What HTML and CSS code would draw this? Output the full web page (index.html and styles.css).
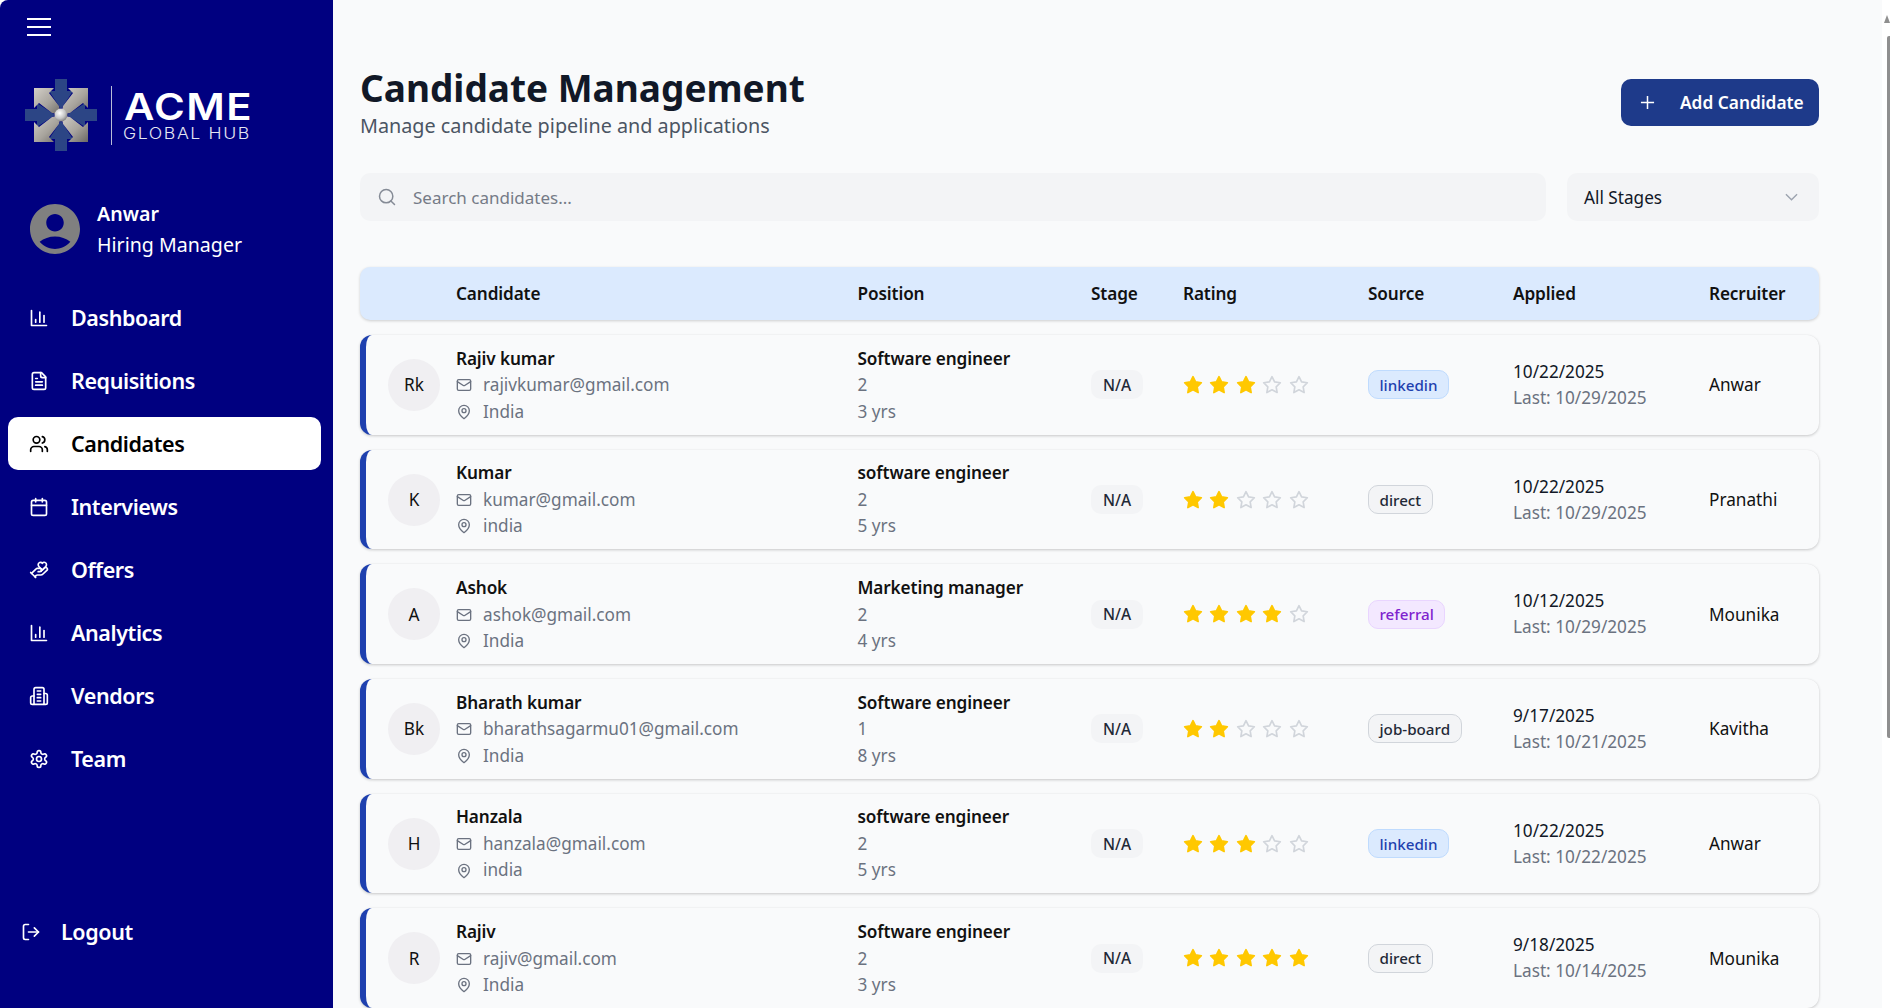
FILE: index.html
```html
<!DOCTYPE html>
<html lang="en">
<head>
<meta charset="utf-8">
<title>Candidate Management</title>
<link rel="stylesheet" href="styles.css">
</head>
<body>
<svg class="defs" width="0" height="0" aria-hidden="true">
  <defs>
    <symbol id="i-chart" viewBox="0 0 24 24"><path d="M3 3v18h18"/><path d="M18 17V9"/><path d="M13 17V5"/><path d="M8 17v-3"/></symbol>
    <symbol id="i-file" viewBox="0 0 24 24"><path d="M15 2H6a2 2 0 0 0-2 2v16a2 2 0 0 0 2 2h12a2 2 0 0 0 2-2V7Z"/><path d="M14 2v4a2 2 0 0 0 2 2h4"/><path d="M10 9H8"/><path d="M16 13H8"/><path d="M16 17H8"/></symbol>
    <symbol id="i-users" viewBox="0 0 24 24"><path d="M16 21v-2a4 4 0 0 0-4-4H6a4 4 0 0 0-4 4v2"/><circle cx="9" cy="7" r="4"/><path d="M22 21v-2a4 4 0 0 0-3-3.87"/><path d="M16 3.13a4 4 0 0 1 0 7.75"/></symbol>
    <symbol id="i-cal" viewBox="0 0 24 24"><path d="M8 2v4"/><path d="M16 2v4"/><rect x="3" y="4" width="18" height="18" rx="2"/><path d="M3 10h18"/></symbol>
    <symbol id="i-hand" viewBox="0 0 24 24"><path d="M11 14h2a2 2 0 1 0 0-4h-3c-.6 0-1.1.2-1.4.6L3 16"/><path d="m7 20 1.6-1.4c.3-.4.8-.6 1.4-.6h4c1.1 0 2.1-.4 2.8-1.2l4.6-4.4a2 2 0 0 0-2.75-2.91l-4.2 3.9"/><path d="m2 15 6 6"/><path d="M19.5 8.5c.7-.7 1.5-1.6 1.5-2.7A2.73 2.73 0 0 0 16 4a2.78 2.78 0 0 0-5 1.8c0 1.2.8 2 1.5 2.8L16 12Z"/></symbol>
    <symbol id="i-building" viewBox="0 0 24 24"><path d="M6 22V4a2 2 0 0 1 2-2h8a2 2 0 0 1 2 2v18Z"/><path d="M6 12H4a2 2 0 0 0-2 2v6a2 2 0 0 0 2 2h2"/><path d="M18 9h2a2 2 0 0 1 2 2v9a2 2 0 0 1-2 2h-2"/><path d="M10 6h4"/><path d="M10 10h4"/><path d="M10 14h4"/><path d="M10 18h4"/></symbol>
    <symbol id="i-gear" viewBox="0 0 24 24"><path d="M12.22 2h-.44a2 2 0 0 0-2 2v.18a2 2 0 0 1-1 1.73l-.43.25a2 2 0 0 1-2 0l-.15-.08a2 2 0 0 0-2.73.73l-.22.38a2 2 0 0 0 .73 2.73l.15.1a2 2 0 0 1 1 1.72v.51a2 2 0 0 1-1 1.74l-.15.09a2 2 0 0 0-.73 2.73l.22.38a2 2 0 0 0 2.73.73l.15-.08a2 2 0 0 1 2 0l.43.25a2 2 0 0 1 1 1.73V20a2 2 0 0 0 2 2h.44a2 2 0 0 0 2-2v-.18a2 2 0 0 1 1-1.73l.43-.25a2 2 0 0 1 2 0l.15.08a2 2 0 0 0 2.73-.73l.22-.39a2 2 0 0 0-.73-2.73l-.15-.08a2 2 0 0 1-1-1.74v-.5a2 2 0 0 1 1-1.74l.15-.09a2 2 0 0 0 .73-2.73l-.22-.38a2 2 0 0 0-2.73-.73l-.15.08a2 2 0 0 1-2 0l-.43-.25a2 2 0 0 1-1-1.73V4a2 2 0 0 0-2-2z"/><circle cx="12" cy="12" r="3"/></symbol>
    <symbol id="i-logout" viewBox="0 0 24 24"><path d="M9 21H5a2 2 0 0 1-2-2V5a2 2 0 0 1 2-2h4"/><path d="m16 17 5-5-5-5"/><path d="M21 12H9"/></symbol>
    <symbol id="i-mail" viewBox="0 0 24 24"><rect x="2" y="4" width="20" height="16" rx="2"/><path d="m22 7-8.97 5.7a1.94 1.94 0 0 1-2.06 0L2 7"/></symbol>
    <symbol id="i-pin" viewBox="0 0 24 24"><path d="M20 10c0 6-8 12-8 12s-8-6-8-12a8 8 0 0 1 16 0Z"/><circle cx="12" cy="10" r="3"/></symbol>
    <symbol id="i-star" viewBox="0 0 24 24"><polygon points="12 2 15.09 8.26 22 9.27 17 14.14 18.18 21.02 12 17.77 5.82 21.02 7 14.14 2 9.27 8.91 8.26 12 2"/></symbol>
    <linearGradient id="g-steel" x1="0" y1="0" x2="1" y2="1"><stop offset="0" stop-color="#d3cfc8"/><stop offset=".55" stop-color="#a8a49d"/><stop offset="1" stop-color="#6b6864"/></linearGradient>
    <radialGradient id="g-ball" cx=".4" cy=".35" r=".7"><stop offset="0" stop-color="#ffffff"/><stop offset=".6" stop-color="#c4c4c4"/><stop offset="1" stop-color="#777"/></radialGradient>
  </defs>
</svg>

<div class="app">
  <aside class="sidebar">
    <button class="menu-btn" aria-label="Menu">
      <svg class="menu-svg" viewBox="0 0 24 20"><path d="M0 2h24M0 10h24M0 18h24"/></svg>
    </button>
    <div class="brand">
      <svg class="brand-mark" viewBox="0 0 72 72">
        <g fill="#2c4585">
          <polygon points="30,0 42,0 42,12 48,12 36,30 24,12 30,12"/>
          <polygon points="30,72 42,72 42,60 48,60 36,42 24,60 30,60"/>
          <polygon points="0,30 0,42 12,42 12,48 30,36 12,24 12,30"/>
          <polygon points="72,30 72,42 60,42 60,48 42,36 60,24 60,30"/>
        </g>
        <g fill="url(#g-steel)">
          <polygon points="9,9 29,9 24,14 34,27 36,36 27,34 14,24 9,29"/>
          <polygon points="63,9 43,9 48,14 38,27 36,36 45,34 58,24 63,29"/>
          <polygon points="9,63 29,63 24,58 34,45 36,36 27,38 14,48 9,43"/>
          <polygon points="63,63 43,63 48,58 38,45 36,36 45,38 58,48 63,43"/>
        </g>
        <circle cx="36" cy="36" r="6.5" fill="url(#g-ball)"/>
      </svg>
      <div class="brand-text">
        <span class="brand-name">ACME</span>
        <span class="brand-sub">GLOBAL HUB</span>
      </div>
    </div>
    <div class="user">
      <svg class="user-avatar" viewBox="2 2 20 20"><path d="M12 2C6.48 2 2 6.48 2 12s4.48 10 10 10 10-4.48 10-10S17.52 2 12 2zm0 4c1.93 0 3.5 1.57 3.5 3.5S13.93 13 12 13s-3.5-1.57-3.5-3.5S10.07 6 12 6zm0 14c-2.03 0-4.43-.82-6.14-2.88C7.55 15.8 9.68 15 12 15s4.45.8 6.14 2.12C16.43 19.18 14.03 20 12 20z"/></svg>
      <div class="user-text">
        <div class="user-name">Anwar</div>
        <div class="user-role">Hiring Manager</div>
      </div>
    </div>
    <nav class="nav">
      <a class="nav-item"><svg class="ico nav-ico"><use href="#i-chart"/></svg>Dashboard</a>
      <a class="nav-item"><svg class="ico nav-ico"><use href="#i-file"/></svg>Requisitions</a>
      <a class="nav-item active"><svg class="ico nav-ico"><use href="#i-users"/></svg>Candidates</a>
      <a class="nav-item"><svg class="ico nav-ico"><use href="#i-cal"/></svg>Interviews</a>
      <a class="nav-item"><svg class="ico nav-ico"><use href="#i-hand"/></svg>Offers</a>
      <a class="nav-item"><svg class="ico nav-ico"><use href="#i-chart"/></svg>Analytics</a>
      <a class="nav-item"><svg class="ico nav-ico"><use href="#i-building"/></svg>Vendors</a>
      <a class="nav-item"><svg class="ico nav-ico"><use href="#i-gear"/></svg>Team</a>
    </nav>
    <a class="logout"><svg class="ico nav-ico"><use href="#i-logout"/></svg>Logout</a>
  </aside>

  <main class="main">
    <header class="page-head">
      <div>
        <h1 class="title">Candidate Management</h1>
        <p class="subtitle">Manage candidate pipeline and applications</p>
      </div>
      <button class="add-btn">
        <svg class="plus" viewBox="0 0 16 16"><path d="M8 1v14M1 8h14"/></svg>
        Add Candidate
      </button>
    </header>

    <div class="filters">
      <div class="search">
        <svg class="search-ico" viewBox="0 0 24 24"><circle cx="11" cy="11" r="8"/><path d="m21 21-4.3-4.3"/></svg>
        <span class="placeholder">Search candidates...</span>
      </div>
      <div class="select">
        <span>All Stages</span>
        <svg class="chev" viewBox="0 0 14 8"><path d="M1 1l6 6 6-6"/></svg>
      </div>
    </div>

    <div class="thead grid">
      <span></span><span>Candidate</span><span>Position</span><span>Stage</span><span>Rating</span><span>Source</span><span>Applied</span><span>Recruiter</span>
    </div>

    <div class="rows">
      <article class="row grid">
        <div class="avatar">Rk</div>
        <div class="cell-lines">
          <div class="strong">Rajiv kumar</div>
          <div class="muted with-ico"><svg class="ico mini"><use href="#i-mail"/></svg>rajivkumar@gmail.com</div>
          <div class="muted with-ico"><svg class="ico mini"><use href="#i-pin"/></svg>India</div>
        </div>
        <div class="cell-lines"><div class="strong">Software engineer</div><div class="muted">2</div><div class="muted">3 yrs</div></div>
        <div><span class="stage">N/A</span></div>
        <div class="stars"><svg class="star on"><use href="#i-star"/></svg><svg class="star on"><use href="#i-star"/></svg><svg class="star on"><use href="#i-star"/></svg><svg class="star"><use href="#i-star"/></svg><svg class="star"><use href="#i-star"/></svg></div>
        <div><span class="tag tag-blue">linkedin</span></div>
        <div><div class="date">10/22/2025</div><div class="muted date">Last: 10/29/2025</div></div>
        <div class="recruiter">Anwar</div>
      </article>

      <article class="row grid">
        <div class="avatar">K</div>
        <div class="cell-lines">
          <div class="strong">Kumar</div>
          <div class="muted with-ico"><svg class="ico mini"><use href="#i-mail"/></svg>kumar@gmail.com</div>
          <div class="muted with-ico"><svg class="ico mini"><use href="#i-pin"/></svg>india</div>
        </div>
        <div class="cell-lines"><div class="strong">software engineer</div><div class="muted">2</div><div class="muted">5 yrs</div></div>
        <div><span class="stage">N/A</span></div>
        <div class="stars"><svg class="star on"><use href="#i-star"/></svg><svg class="star on"><use href="#i-star"/></svg><svg class="star"><use href="#i-star"/></svg><svg class="star"><use href="#i-star"/></svg><svg class="star"><use href="#i-star"/></svg></div>
        <div><span class="tag tag-gray">direct</span></div>
        <div><div class="date">10/22/2025</div><div class="muted date">Last: 10/29/2025</div></div>
        <div class="recruiter">Pranathi</div>
      </article>

      <article class="row grid">
        <div class="avatar">A</div>
        <div class="cell-lines">
          <div class="strong">Ashok</div>
          <div class="muted with-ico"><svg class="ico mini"><use href="#i-mail"/></svg>ashok@gmail.com</div>
          <div class="muted with-ico"><svg class="ico mini"><use href="#i-pin"/></svg>India</div>
        </div>
        <div class="cell-lines"><div class="strong">Marketing manager</div><div class="muted">2</div><div class="muted">4 yrs</div></div>
        <div><span class="stage">N/A</span></div>
        <div class="stars"><svg class="star on"><use href="#i-star"/></svg><svg class="star on"><use href="#i-star"/></svg><svg class="star on"><use href="#i-star"/></svg><svg class="star on"><use href="#i-star"/></svg><svg class="star"><use href="#i-star"/></svg></div>
        <div><span class="tag tag-purple">referral</span></div>
        <div><div class="date">10/12/2025</div><div class="muted date">Last: 10/29/2025</div></div>
        <div class="recruiter">Mounika</div>
      </article>

      <article class="row grid">
        <div class="avatar">Bk</div>
        <div class="cell-lines">
          <div class="strong">Bharath kumar</div>
          <div class="muted with-ico"><svg class="ico mini"><use href="#i-mail"/></svg>bharathsagarmu01@gmail.com</div>
          <div class="muted with-ico"><svg class="ico mini"><use href="#i-pin"/></svg>India</div>
        </div>
        <div class="cell-lines"><div class="strong">Software engineer</div><div class="muted">1</div><div class="muted">8 yrs</div></div>
        <div><span class="stage">N/A</span></div>
        <div class="stars"><svg class="star on"><use href="#i-star"/></svg><svg class="star on"><use href="#i-star"/></svg><svg class="star"><use href="#i-star"/></svg><svg class="star"><use href="#i-star"/></svg><svg class="star"><use href="#i-star"/></svg></div>
        <div><span class="tag tag-gray">job-board</span></div>
        <div><div class="date">9/17/2025</div><div class="muted date">Last: 10/21/2025</div></div>
        <div class="recruiter">Kavitha</div>
      </article>

      <article class="row grid">
        <div class="avatar">H</div>
        <div class="cell-lines">
          <div class="strong">Hanzala</div>
          <div class="muted with-ico"><svg class="ico mini"><use href="#i-mail"/></svg>hanzala@gmail.com</div>
          <div class="muted with-ico"><svg class="ico mini"><use href="#i-pin"/></svg>india</div>
        </div>
        <div class="cell-lines"><div class="strong">software engineer</div><div class="muted">2</div><div class="muted">5 yrs</div></div>
        <div><span class="stage">N/A</span></div>
        <div class="stars"><svg class="star on"><use href="#i-star"/></svg><svg class="star on"><use href="#i-star"/></svg><svg class="star on"><use href="#i-star"/></svg><svg class="star"><use href="#i-star"/></svg><svg class="star"><use href="#i-star"/></svg></div>
        <div><span class="tag tag-blue">linkedin</span></div>
        <div><div class="date">10/22/2025</div><div class="muted date">Last: 10/22/2025</div></div>
        <div class="recruiter">Anwar</div>
      </article>

      <article class="row grid">
        <div class="avatar">R</div>
        <div class="cell-lines">
          <div class="strong">Rajiv</div>
          <div class="muted with-ico"><svg class="ico mini"><use href="#i-mail"/></svg>rajiv@gmail.com</div>
          <div class="muted with-ico"><svg class="ico mini"><use href="#i-pin"/></svg>India</div>
        </div>
        <div class="cell-lines"><div class="strong">Software engineer</div><div class="muted">2</div><div class="muted">3 yrs</div></div>
        <div><span class="stage">N/A</span></div>
        <div class="stars"><svg class="star on"><use href="#i-star"/></svg><svg class="star on"><use href="#i-star"/></svg><svg class="star on"><use href="#i-star"/></svg><svg class="star on"><use href="#i-star"/></svg><svg class="star on"><use href="#i-star"/></svg></div>
        <div><span class="tag tag-gray">direct</span></div>
        <div><div class="date">9/18/2025</div><div class="muted date">Last: 10/14/2025</div></div>
        <div class="recruiter">Mounika</div>
      </article>
    </div>
  </main>

  <div class="scrollbar" aria-hidden="true">
    <span class="scroll-arrow"></span>
    <span class="scroll-thumb"></span>
  </div>
</div>
</body>
</html>
```
FILE: styles.css
```css
* { box-sizing: border-box; }
html, body { margin: 0; height: 100%; background: #fff; overflow: hidden; }
body { font-family: "Noto Sans", "Open Sans", sans-serif; color: #111827; }
.defs { position: absolute; }

.app { display: flex; height: 1008px; position: relative; overflow: hidden; }

/* Sidebar */
.sidebar {
  width: 333px; flex: none; background: #000080; color: #fff;
  display: flex; flex-direction: column; border-top-left-radius: 8px;
}
.menu-btn { background: none; border: 0; padding: 17px 0 0 27px; height: 37px; text-align: left; flex: none; }
.menu-svg { width: 24px; height: 20px; display: block; }
.menu-svg path { stroke: #fff; stroke-width: 2; fill: none; }

.brand { display: flex; align-items: center; margin: 42px 0 0 25px; height: 72px; }
.brand-mark { width: 72px; height: 72px; flex: none; }
.brand-text {
  margin-left: 14px; padding-left: 11px; border-left: 1px solid #b9bdd8;
  height: 59px; display: flex; flex-direction: column; justify-content: flex-start;
}
.brand-name { font-family: Inter, sans-serif; font-weight: 600; font-size: 37px; line-height: 34px; margin-top: 4px; margin-left: 1px; letter-spacing: 1.2px; transform: scaleX(1.13); transform-origin: left center; }
.brand-sub { font-family: Inter, sans-serif; font-weight: 300; font-size: 15.5px; line-height: 16px; letter-spacing: 1.4px; color: #e4e6f2; margin-top: 2px; white-space: nowrap; transform: scaleX(1.14); transform-origin: left center; }

.user { display: flex; align-items: center; margin: 48px 0 0 30px; height: 60px; }
.user-avatar { width: 50px; height: 50px; flex: none; fill: #808080; }
.user-text { margin-left: 17px; font-size: 19.6px; line-height: 31px; }
.user-name { font-weight: 600; }

.nav { display: flex; flex-direction: column; margin-top: 32px; gap: 10px; padding: 0 12px 0 8px; }
.nav-item, .logout {
  display: flex; align-items: center; height: 53px; color: #fff;
  font-size: 21.5px; font-weight: 600; letter-spacing: -.4px; border-radius: 10px; padding-left: 21px;
}
.nav-item.active { background: #fff; color: #000; }
.nav-ico { width: 20px; height: 20px; margin-right: 22px; flex: none; }
.ico { fill: none; stroke: currentColor; stroke-width: 2; stroke-linecap: round; stroke-linejoin: round; }
.logout { margin-top: auto; margin-bottom: 50px; padding-left: 21px; }
.logout .nav-ico { margin-right: 20px; }

/* Main */
.main { flex: 1; min-width: 0; background: #f9fafb; padding: 64px 71px 0 27px; }
.page-head { display: flex; justify-content: space-between; align-items: flex-start; height: 109px; }
.title { margin: 0; font-size: 37px; line-height: 48px; font-weight: 700; color: #111827; }
.subtitle { margin: 0; font-size: 19.8px; line-height: 28px; color: #4b5563; }
.add-btn {
  width: 198px; height: 47px; margin-top: 15px; border: 0; border-radius: 10px; background: #1e3a8a;
  color: #fff; font: 600 17.3px "Noto Sans", sans-serif; display: flex; align-items: center; padding: 0 0 0 19px; white-space: nowrap;
}
.plus { width: 15px; height: 15px; margin-right: 25px; flex: none; }
.plus path { stroke: #fff; stroke-width: 1.6; fill: none; }

.filters { display: flex; gap: 21px; height: 48px; }
.search, .select {
  display: flex; align-items: center; background: #f3f4f6; border-radius: 10px; font-size: 17.2px;
}
.search { flex: 1; padding-left: 17px; }
.search-ico { width: 20px; height: 20px; fill: none; stroke: #858b96; stroke-width: 1.8; stroke-linecap: round; margin-right: 16px; }
.placeholder { color: #757b87; font-size: 17px; }
.select { width: 252px; padding: 0 21px 0 17px; justify-content: space-between; color: #111827; }
.chev { width: 13px; height: 8px; fill: none; stroke: #9ca3af; stroke-width: 1.5; }

/* Table */
.grid { display: grid; grid-template-columns: 96px 401.5px 233.5px 92px 185px 145px 196px 110px; align-items: center; }
.thead {
  height: 53px; margin-top: 46px; padding-bottom: 1px; background: #dbeafe; border-radius: 10px; font-size: 17.2px; font-weight: 600; letter-spacing: -.12px;
  box-shadow: 0 1px 3px rgba(0,0,0,.18); color: #111;
}
.rows { display: flex; flex-direction: column; gap: 15px; margin-top: 15px; }
.row {
  height: 99.7px; flex: none; border-radius: 12px; border-left: 6px solid #1e40af; background: #f9fafb;
  box-shadow: 0 1px 3px rgba(0,0,0,.2), 0 0 1px rgba(0,0,0,.05); font-size: 17.2px;
}
.row > :first-child { margin-left: 22px; }
.row > :nth-child(2) { margin-left: -6px; }
.row > :nth-child(n+3) { margin-left: -6px; }
.avatar {
  width: 52px; height: 52px; border-radius: 50%; background: #f0eff2; display: flex; align-items: center; justify-content: center;
  font-size: 17.2px; color: #111;
}
.cell-lines { line-height: 26.4px; padding-top: 1px; }
.strong { font-weight: 600; color: #111; letter-spacing: -.12px; }
.muted { color: #6b7280; }
.with-ico { display: flex; align-items: center; }
.mini { width: 16px; height: 16px; margin-right: 11px; stroke-width: 2; color: #6b7280; }
.stage {
  display: inline-flex; align-items: center; justify-content: center; width: 52px; height: 29px; border-radius: 10px;
  background: #f3f4f6; font-size: 15.5px; font-weight: 500; color: #1f2937;
}
.stars { display: flex; gap: 6.4px; }
.star { width: 20px; height: 20px; fill: none; stroke: #d1d5db; stroke-width: 2; stroke-linejoin: round; }
.star.on { fill: #ffc800; stroke: #ffc800; }
.tag {
  display: inline-flex; align-items: center; height: 29px; padding: 0 10.5px; border-radius: 10px; border: 1px solid; font-size: 15.2px; font-weight: 500;
}
.tag-blue { background: #dbeafe; border-color: #bfdbfe; color: #1e40af; }
.tag-gray { background: #f3f4f6; border-color: #d1d5db; color: #1f2937; }
.tag-purple { background: #f3e8ff; border-color: #e9d5ff; color: #7e22ce; }
.date { line-height: 26px; font-size: 17.2px; }
.recruiter { font-size: 17.2px; color: #111; }

/* Scrollbar drawn over the page edge */
.scrollbar { position: absolute; right: 0; top: 0; bottom: 0; width: 8px; background: #fff; }
.scroll-thumb { position: absolute; right: 0; top: 36px; width: 3px; height: 702px; background: #8f8f8f; border-radius: 2px 0 0 2px; }
.scroll-arrow { position: absolute; right: 0; top: 15px; border-style: solid; border-width: 0 3px 8px 3px; border-color: transparent transparent #8f8f8f transparent; }
```
